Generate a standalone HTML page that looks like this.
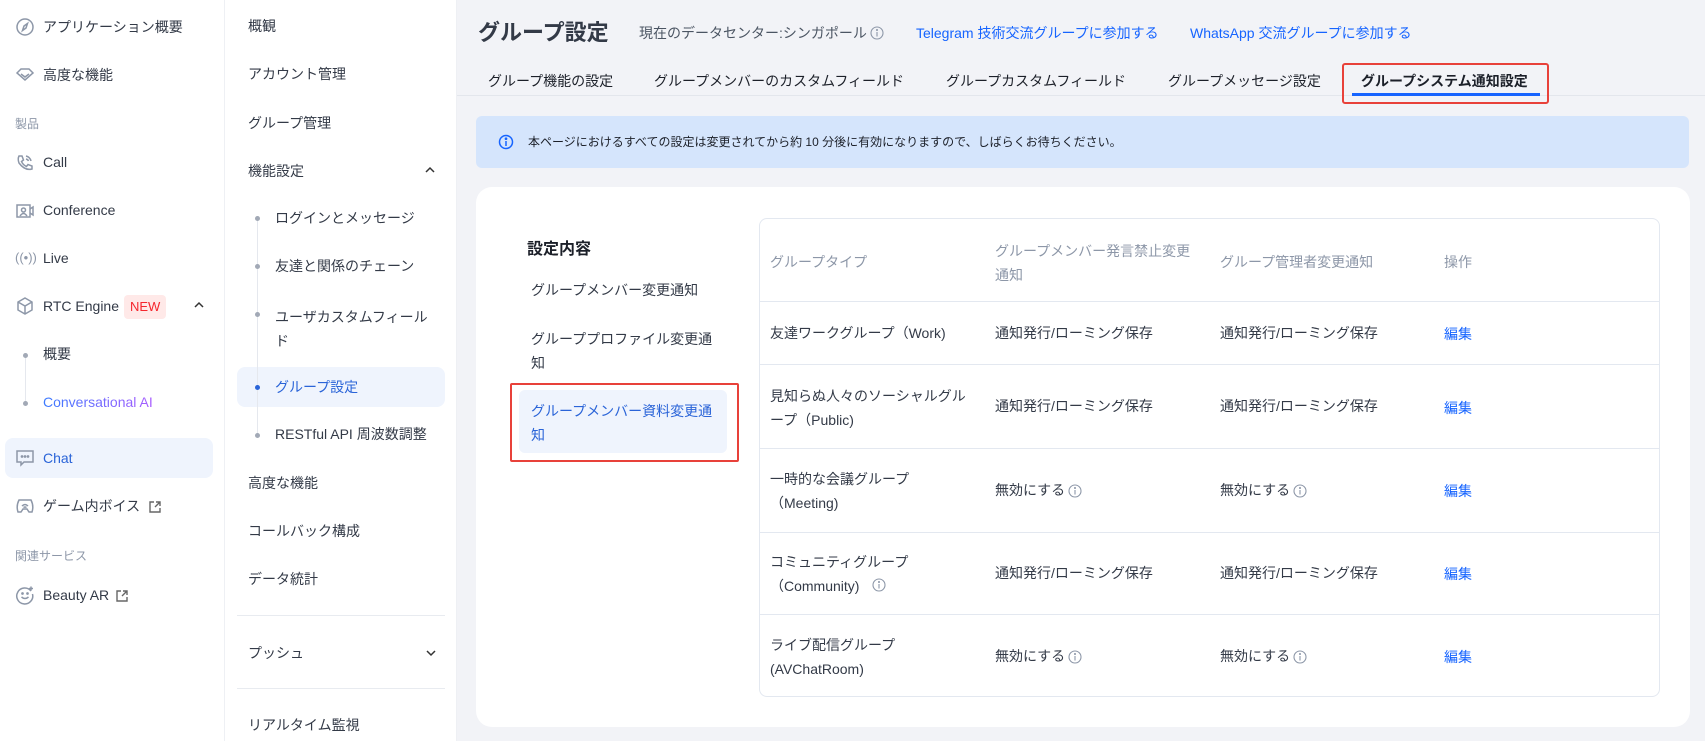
<!DOCTYPE html>
<html><head><meta charset="utf-8">
<style>
*{margin:0;padding:0;box-sizing:border-box}
body{width:1705px;height:741px;overflow:hidden;background:#f2f3f7;font-family:"Liberation Sans","Noto Sans CJK JP",sans-serif;font-size:14px;color:#333a47;position:relative}
.a{position:absolute;white-space:nowrap;line-height:20px}
.g{color:#8d97a8}
.b{color:#1664ff}
.ic{position:absolute;width:20px;height:20px}
</style></head><body>
<!-- sidebar 1 -->
<div style="position:absolute;left:0;top:0;width:225px;height:741px;background:#fff;border-right:1px solid #eef0f4"></div>
<div style="position:absolute;left:5px;top:438px;width:208px;height:40px;background:#eff4fd;border-radius:8px"></div>
<svg class="ic" style="left:15px;top:17px" viewBox="0 0 20 20" fill="none" stroke="#8d97a8" stroke-width="1.5"><circle cx="10" cy="10" r="8"/><path d="M12.5 6.5 L9 9 L7.5 13.5 L11 11 Z"/></svg>
<div class="a" style="left:43px;top:17px">アプリケーション概要</div>
<svg class="ic" style="left:15px;top:65px" viewBox="0 0 20 20" fill="none" stroke="#8d97a8" stroke-width="1.5"><path d="M2 8 L6 4 H14 L18 8 L10 15 Z M6 9 L10 12 L14 9"/></svg>
<div class="a" style="left:43px;top:65px">高度な機能</div>
<div class="a g" style="left:15px;top:114px;font-size:12px">製品</div>
<svg class="ic" style="left:15px;top:153px" viewBox="0 0 20 20" fill="none" stroke="#8d97a8" stroke-width="1.5"><path d="M4 3 L7 3 L8.5 7 L6.5 8.5 Q8 12 11.5 13.5 L13 11.5 L17 13 L17 16 Q10 18 4 10 Q2.5 6 4 3Z M11 3 Q15 4 16 8 M11 6 Q13 6.5 13.5 8"/></svg>
<div class="a" style="left:43px;top:152px">Call</div>
<svg class="ic" style="left:15px;top:201px" viewBox="0 0 20 20" fill="none" stroke="#8d97a8" stroke-width="1.5"><rect x="2" y="4" width="13" height="12"/><circle cx="8.5" cy="9" r="2"/><path d="M5 15 Q8.5 10 12 15 M15 8 L18 6 V14 L15 12"/></svg>
<div class="a" style="left:43px;top:200px">Conference</div>
<div class="a g" style="left:15px;top:248px;font-size:13px">((•))</div>
<div class="a" style="left:43px;top:248px">Live</div>
<svg class="ic" style="left:15px;top:296px" viewBox="0 0 20 20" fill="none" stroke="#8d97a8" stroke-width="1.5"><path d="M10 2 L17 6 V14 L10 18 L3 14 V6 Z M3 6 L10 10 L17 6 M10 10 V18"/></svg>
<div class="a" style="left:43px;top:296px">RTC Engine</div>
<div class="a" style="left:124px;top:295px;height:24px;line-height:24px;padding:0 6px;background:#ffe9e8;color:#f5262d;border-radius:4px;font-size:13px">NEW</div>
<svg style="position:absolute;left:194px;top:301px" width="10" height="8" viewBox="0 0 10 8" fill="none" stroke="#333" stroke-width="1.5"><path d="M1 6 L5 2 L9 6"/></svg>
<div style="position:absolute;left:25px;top:357px;width:1px;height:46px;background:#e5e8ee"></div>
<div style="position:absolute;left:23px;top:353px;width:5px;height:5px;border-radius:50%;background:#a2a9b6"></div>
<div style="position:absolute;left:23px;top:401px;width:5px;height:5px;border-radius:50%;background:#a2a9b6"></div>
<div class="a" style="left:43px;top:344px">概要</div>
<div class="a" style="left:43px;top:392px;background:linear-gradient(90deg,#3b7bff,#a95cff);-webkit-background-clip:text;color:transparent">Conversational AI</div>
<svg class="ic" style="left:16px;top:149px;display:none"></svg>
<svg class="ic" style="left:15px;top:448px" viewBox="0 0 20 20" fill="none" stroke="#8d97a8" stroke-width="1.5"><path d="M2 3 H18 V14 H9 L6 17 V14 H2 Z"/><circle cx="7" cy="8.5" r=".6" fill="#8d97a8"/><circle cx="10" cy="8.5" r=".6" fill="#8d97a8"/><circle cx="13" cy="8.5" r=".6" fill="#8d97a8"/></svg>
<div class="a b" style="left:43px;top:448px;color:#2a64d8">Chat</div>
<svg class="ic" style="left:15px;top:496px" viewBox="0 0 20 20" fill="none" stroke="#8d97a8" stroke-width="1.5"><path d="M4 4 H16 Q19 10 17 16 L14 16 L12 13 H8 L6 16 L3 16 Q1 10 4 4 Z M7 10 Q10 7 13 10 M8.5 11.5 Q10 10.5 11.5 11.5"/></svg>
<div class="a" style="left:43px;top:496px">ゲーム内ボイス</div>
<svg style="position:absolute;left:149px;top:501px" width="12" height="12" viewBox="0 0 12 12" fill="none" stroke="#666" stroke-width="1.4"><path d="M5 1 H1 V11 H11 V7 M7 1 H11 V5 M11 1 L6 6"/></svg>
<div class="a g" style="left:15px;top:546px;font-size:12px">関連サービス</div>
<svg class="ic" style="left:15px;top:585px" viewBox="0 0 20 20" fill="none" stroke="#8d97a8" stroke-width="1.5"><path d="M16 6 A8 8 0 1 0 17.5 9"/><circle cx="7.5" cy="8.5" r=".6" fill="#8d97a8"/><circle cx="12.5" cy="8.5" r=".6" fill="#8d97a8"/><path d="M6.5 12 Q10 15 13.5 12 M16 1.5 V5.5 M14 3.5 H18"/></svg>
<div class="a" style="left:43px;top:585px">Beauty AR</div>
<svg style="position:absolute;left:116px;top:590px" width="12" height="12" viewBox="0 0 12 12" fill="none" stroke="#666" stroke-width="1.4"><path d="M5 1 H1 V11 H11 V7 M7 1 H11 V5 M11 1 L6 6"/></svg>

<!-- sidebar 2 -->
<div style="position:absolute;left:225px;top:0;width:232px;height:741px;background:#fff;border-right:1px solid #eef0f4"></div>
<div style="position:absolute;left:237px;top:367px;width:208px;height:40px;background:#eff4fd;border-radius:8px"></div>
<div class="a" style="left:248px;top:16px">概観</div>
<div class="a" style="left:248px;top:64px">アカウント管理</div>
<div class="a" style="left:248px;top:113px">グループ管理</div>
<div class="a" style="left:248px;top:161px">機能設定</div>
<svg style="position:absolute;left:425px;top:166px" width="10" height="8" viewBox="0 0 10 8" fill="none" stroke="#333" stroke-width="1.5"><path d="M1 6 L5 2 L9 6"/></svg>
<div style="position:absolute;left:257px;top:218px;width:1px;height:217px;background:#e5e8ee"></div>
<div style="position:absolute;left:255px;top:216px;width:5px;height:5px;border-radius:50%;background:#a2a9b6"></div>
<div style="position:absolute;left:255px;top:264px;width:5px;height:5px;border-radius:50%;background:#a2a9b6"></div>
<div style="position:absolute;left:255px;top:312px;width:5px;height:5px;border-radius:50%;background:#a2a9b6"></div>
<div style="position:absolute;left:255px;top:385px;width:5px;height:5px;border-radius:50%;background:#2a64d8"></div>
<div style="position:absolute;left:255px;top:433px;width:5px;height:5px;border-radius:50%;background:#a2a9b6"></div>
<div class="a" style="left:275px;top:208px">ログインとメッセージ</div>
<div class="a" style="left:275px;top:256px">友達と関係のチェーン</div>
<div class="a" style="left:275px;top:305px;line-height:24px">ユーザカスタムフィール<br>ド</div>
<div class="a" style="left:275px;top:377px;color:#2a64d8">グループ設定</div>
<div class="a" style="left:275px;top:424px">RESTful API 周波数調整</div>
<div class="a" style="left:248px;top:473px">高度な機能</div>
<div class="a" style="left:248px;top:521px">コールバック構成</div>
<div class="a" style="left:248px;top:569px">データ統計</div>
<div style="position:absolute;left:237px;top:615px;width:208px;height:1px;background:#e8ebf0"></div>
<div class="a" style="left:248px;top:643px">プッシュ</div>
<svg style="position:absolute;left:426px;top:649px" width="10" height="8" viewBox="0 0 10 8" fill="none" stroke="#333" stroke-width="1.5"><path d="M1 2 L5 6 L9 2"/></svg>
<div style="position:absolute;left:237px;top:688px;width:208px;height:1px;background:#e8ebf0"></div>
<div class="a" style="left:248px;top:715px">リアルタイム監視</div>

<!-- main header -->
<div class="a" style="left:478px;top:18px;font-size:22px;line-height:30px;font-weight:bold;color:#333a47">グループ設定</div>
<div class="a" style="left:639px;top:23px;color:#4b5563">現在のデータセンター:シンガポール</div>
<svg style="position:absolute;left:870px;top:26px" width="14" height="14" viewBox="0 0 14 14" fill="none" stroke="#8d97a8" stroke-width="1.1"><circle cx="7" cy="7" r="6"/><path d="M7 6 V10.5"/><circle cx="7" cy="4" r=".5" fill="#8d97a8"/></svg>
<div class="a b" style="left:916px;top:23px">Telegram 技術交流グループに参加する</div>
<div class="a b" style="left:1190px;top:23px">WhatsApp 交流グループに参加する</div>
<div style="position:absolute;left:457px;top:95px;width:1248px;height:1px;background:#e3e6ec"></div>
<div class="a" style="left:488px;top:71px;color:#1c2029">グループ機能の設定</div>
<div class="a" style="left:654px;top:71px;color:#1c2029">グループメンバーのカスタムフィールド</div>
<div class="a" style="left:946px;top:71px;color:#1c2029">グループカスタムフィールド</div>
<div class="a" style="left:1168px;top:71px;color:#1c2029">グループメッセージ設定</div>
<div class="a" style="left:1361px;top:71px;color:#1c2029;font-weight:bold">グループシステム通知設定</div>
<div style="position:absolute;left:1352px;top:93px;width:188px;height:3px;background:#1664ff"></div>
<div style="position:absolute;left:1342px;top:63px;width:207px;height:41px;border:2px solid #e8413a;border-radius:3px"></div>

<!-- banner -->
<div style="position:absolute;left:476px;top:116px;width:1213px;height:52px;background:#d5e5fc;border-radius:6px"></div>
<svg style="position:absolute;left:498px;top:134px" width="16" height="16" viewBox="0 0 16 16" fill="none" stroke="#1664ff" stroke-width="1.5"><circle cx="8" cy="8" r="6.5"/><path d="M8 7 V12"/><circle cx="8" cy="4.7" r=".6" fill="#1664ff"/></svg>
<div class="a" style="left:528px;top:132px;font-size:12px;color:#1c2029">本ページにおけるすべての設定は変更されてから約 10 分後に有効になりますので、しばらくお待ちください。</div>

<!-- card -->
<div style="position:absolute;left:476px;top:187px;width:1214px;height:540px;background:#fff;border-radius:16px"></div>
<div class="a" style="left:527px;top:240px;font-size:16px;font-weight:bold;color:#1c2029">設定内容</div>
<div class="a" style="left:531px;top:280px">グループメンバー変更通知</div>
<div class="a" style="left:531px;top:327px;line-height:24px">グループプロファイル変更通<br>知</div>
<div style="position:absolute;left:519px;top:390px;width:208px;height:63px;background:#eff4fd;border-radius:6px"></div>
<div class="a" style="left:531px;top:399px;line-height:24px;color:#2a64d8">グループメンバー資料変更通<br>知</div>
<div style="position:absolute;left:510px;top:383px;width:229px;height:79px;border:2px solid #e8413a;border-radius:2px"></div>

<!-- table -->
<div style="position:absolute;left:759px;top:218px;width:901px;height:479px;border:1px solid #e3e8f0;border-radius:8px"></div>
<div style="position:absolute;left:760px;top:301px;width:899px;height:1px;background:#e3e8f0"></div>
<div style="position:absolute;left:760px;top:364px;width:899px;height:1px;background:#e3e8f0"></div>
<div style="position:absolute;left:760px;top:448px;width:899px;height:1px;background:#e3e8f0"></div>
<div style="position:absolute;left:760px;top:532px;width:899px;height:1px;background:#e3e8f0"></div>
<div style="position:absolute;left:760px;top:614px;width:899px;height:1px;background:#e3e8f0"></div>

<div class="a g" style="left:770px;top:252px">グループタイプ</div>
<div class="a g" style="left:995px;top:239px;line-height:24px">グループメンバー発言禁止変更<br>通知</div>
<div class="a g" style="left:1220px;top:252px">グループ管理者変更通知</div>
<div class="a g" style="left:1444px;top:252px">操作</div>

<div class="a" style="left:770px;top:323px">友達ワークグループ（Work)</div>
<div class="a" style="left:995px;top:323px">通知発行/ローミング保存</div>
<div class="a" style="left:1220px;top:323px">通知発行/ローミング保存</div>
<div class="a b" style="left:1444px;top:324px">編集</div>

<div class="a" style="left:770px;top:384px;line-height:24px">見知らぬ人々のソーシャルグル<br>ープ（Public)</div>
<div class="a" style="left:995px;top:396px">通知発行/ローミング保存</div>
<div class="a" style="left:1220px;top:396px">通知発行/ローミング保存</div>
<div class="a b" style="left:1444px;top:398px">編集</div>

<div class="a" style="left:770px;top:467px;line-height:24px">一時的な会議グループ<br>（Meeting)</div>
<div class="a" style="left:995px;top:480px">無効にする</div>
<div class="a" style="left:1220px;top:480px">無効にする</div>
<div class="a b" style="left:1444px;top:481px">編集</div>

<div class="a" style="left:770px;top:550px;line-height:24px">コミュニティグループ<br>（Community)</div>
<div class="a" style="left:995px;top:563px">通知発行/ローミング保存</div>
<div class="a" style="left:1220px;top:563px">通知発行/ローミング保存</div>
<div class="a b" style="left:1444px;top:564px">編集</div>

<div class="a" style="left:770px;top:633px;line-height:24px">ライブ配信グループ<br>(AVChatRoom)</div>
<div class="a" style="left:995px;top:646px">無効にする</div>
<div class="a" style="left:1220px;top:646px">無効にする</div>
<div class="a b" style="left:1444px;top:647px">編集</div>

<svg style="position:absolute;left:1068px;top:484px" width="14" height="14" viewBox="0 0 14 14" fill="none" stroke="#8d97a8" stroke-width="1.1"><circle cx="7" cy="7" r="6"/><path d="M7 6 V10.5"/><circle cx="7" cy="4" r=".5" fill="#8d97a8"/></svg>
<svg style="position:absolute;left:1293px;top:484px" width="14" height="14" viewBox="0 0 14 14" fill="none" stroke="#8d97a8" stroke-width="1.1"><circle cx="7" cy="7" r="6"/><path d="M7 6 V10.5"/><circle cx="7" cy="4" r=".5" fill="#8d97a8"/></svg>
<svg style="position:absolute;left:872px;top:578px" width="14" height="14" viewBox="0 0 14 14" fill="none" stroke="#8d97a8" stroke-width="1.1"><circle cx="7" cy="7" r="6"/><path d="M7 6 V10.5"/><circle cx="7" cy="4" r=".5" fill="#8d97a8"/></svg>
<svg style="position:absolute;left:1068px;top:650px" width="14" height="14" viewBox="0 0 14 14" fill="none" stroke="#8d97a8" stroke-width="1.1"><circle cx="7" cy="7" r="6"/><path d="M7 6 V10.5"/><circle cx="7" cy="4" r=".5" fill="#8d97a8"/></svg>
<svg style="position:absolute;left:1293px;top:650px" width="14" height="14" viewBox="0 0 14 14" fill="none" stroke="#8d97a8" stroke-width="1.1"><circle cx="7" cy="7" r="6"/><path d="M7 6 V10.5"/><circle cx="7" cy="4" r=".5" fill="#8d97a8"/></svg>
</body></html>
